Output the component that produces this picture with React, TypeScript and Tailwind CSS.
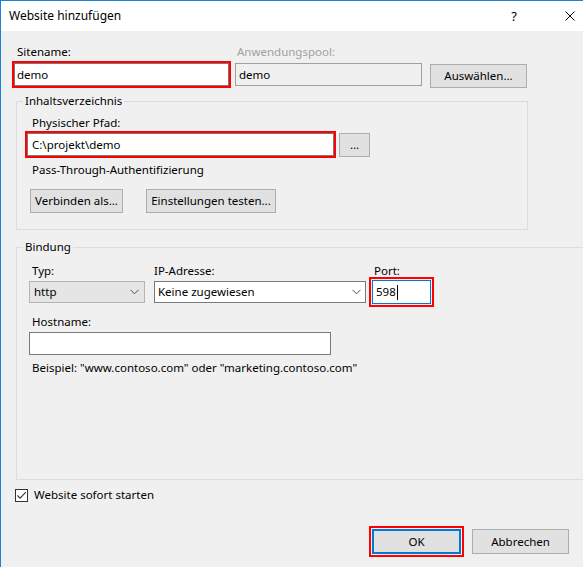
import React from "react";

function Chevron() {
  return (
    <svg width="9" height="6" viewBox="0 0 9 6" className="shrink-0">
      <path d="M0.5 0.8 L4.5 4.8 L8.5 0.8" fill="none" stroke="#505050" strokeWidth="1" />
    </svg>
  );
}

function WinButton({ label, className = "" }: { label: string; className?: string }) {
  return (
    <div
      className={`h-[24px] border border-[#adadad] bg-[#e1e1e1] flex items-center justify-center ${className}`}
    >
      {label}
    </div>
  );
}

export default function App() {
  return (
    <div className="w-[583px] h-[567px] overflow-hidden bg-[#f0f0f0] border-l border-t border-[#1883d7] flex flex-col text-black font-['Noto_Sans',sans-serif] text-[11.5px] leading-[16px]">
      {/* Titelleiste */}
      <div className="h-[30px] bg-white flex items-center pl-[8px] shrink-0 text-[12px]">
        <span>Website hinzufügen</span>
        <span className="ml-auto text-[13px]">?</span>
        <svg width="10" height="10" viewBox="0 0 10 10" className="ml-[48px] mr-[8px]">
          <path d="M0.5 0.5 L9.5 9.5 M9.5 0.5 L0.5 9.5" stroke="#000" strokeWidth="1" />
        </svg>
      </div>

      {/* Sitename / Anwendungspool */}
      <div className="mt-[13px] flex items-start">
        <div className="ml-[11px] w-[219px] flex flex-col">
          <div className="pl-[5px]">Sitename:</div>
          <div className="mt-[1px] h-[27px] border-2 border-[#ff0000]">
            <div className="h-full border border-[#7a7a7a] bg-white px-[2px] flex items-center">demo</div>
          </div>
        </div>
        <div className="ml-[4px] w-[187px] flex flex-col">
          <div className="pl-[2px] text-[#a0a0a0]">Anwendungspool:</div>
          <div className="mt-[3px] h-[23px] border border-[#a0a0a0] px-[3px] flex items-center">demo</div>
        </div>
        <WinButton label="Auswählen..." className="ml-[8px] mt-[20px] w-[97px]" />
      </div>

      {/* Inhaltsverzeichnis */}
      <fieldset className="mt-[5px] ml-[15px] w-[512px] h-[137px] border border-[#dcdcdc] shrink-0">
        <legend className="ml-[6px] px-[2px]">Inhaltsverzeichnis</legend>
        <div className="mt-[6px] pl-[15px]">Physischer Pfad:</div>
        <div className="flex items-start">
          <div className="ml-[8px] w-[311px] h-[27px] border-2 border-[#ff0000]">
            <div className="h-full border border-[#7a7a7a] bg-white px-[4px] flex items-center">C:\projekt\demo</div>
          </div>
          <WinButton label="..." className="ml-[3px] mt-[2px] w-[31px]" />
        </div>
        <div className="mt-[4px] pl-[15px]">Pass-Through-Authentifizierung</div>
        <div className="mt-[11px] flex">
          <WinButton label="Verbinden als..." className="ml-[13px] w-[93px]" />
          <WinButton label="Einstellungen testen..." className="ml-[23px] w-[130px]" />
        </div>
      </fieldset>

      {/* Bindung */}
      <fieldset className="mt-[9px] ml-[15px] w-[600px] h-[241px] border border-[#dcdcdc] shrink-0">
        <legend className="ml-[6px] px-[2px]">Bindung</legend>
        <div className="mt-[8px] flex items-start">
          <div className="ml-[12px] w-[116px] flex flex-col">
            <div className="pl-[3px]">Typ:</div>
            <div className="mt-[2px] h-[22px] border border-[#b4b4b4] bg-[#e5e5e5] pl-[4px] pr-[5px] flex items-center justify-between">
              <span>http</span>
              <Chevron />
            </div>
          </div>
          <div className="ml-[9px] w-[212px] flex flex-col">
            <div>IP-Adresse:</div>
            <div className="mt-[2px] h-[22px] border border-[#7a7a7a] bg-white pl-[3px] pr-[4px] flex items-center justify-between">
              <span>Keine zugewiesen</span>
              <Chevron />
            </div>
          </div>
          <div className="ml-[3px] w-[65px] flex flex-col">
            <div className="pl-[5px]">Port:</div>
            <div className="mt-[-2px] h-[30px] border-2 border-[#ff0000] p-[1px]">
              <div className="h-full border border-[#0078d7] bg-white pl-[3px] flex items-center">
                <span>598</span>
                <span className="ml-[1px] w-px h-[15px] bg-black" />
              </div>
            </div>
          </div>
        </div>
        <div className="mt-[7px] pl-[15px]">Hostname:</div>
        <div className="mt-[2px] ml-[12px] w-[302px] h-[23px] border border-[#7a7a7a] bg-white" />
        <div className="mt-[5px] pl-[15px]">Beispiel: "www.contoso.com" oder "marketing.contoso.com"</div>
      </fieldset>

      {/* Checkbox */}
      <div className="mt-[7px] ml-[14px] h-[16px] flex items-center">
        <div className="w-[13px] h-[13px] border border-[#333] bg-white flex items-center justify-center">
          <svg width="11" height="11" viewBox="0 0 11 11">
            <path d="M1.5 5.5 L4.2 8.2 L9.8 2.2" fill="none" stroke="#333" strokeWidth="1.1" />
          </svg>
        </div>
        <span className="ml-[6px]">Website sofort starten</span>
      </div>

      {/* Buttons */}
      <div className="mt-[23px] pr-[14px] flex justify-end items-start">
        <div className="w-[95px] h-[31px] border-2 border-[#ff0000] p-px">
          <div className="h-full border-2 border-[#0078d7] bg-[#e1e1e1] flex items-center justify-center">OK</div>
        </div>
        <WinButton label="Abbrechen" className="ml-[8px] mt-[3px] w-[97px] h-[25px]" />
      </div>
    </div>
  );
}
